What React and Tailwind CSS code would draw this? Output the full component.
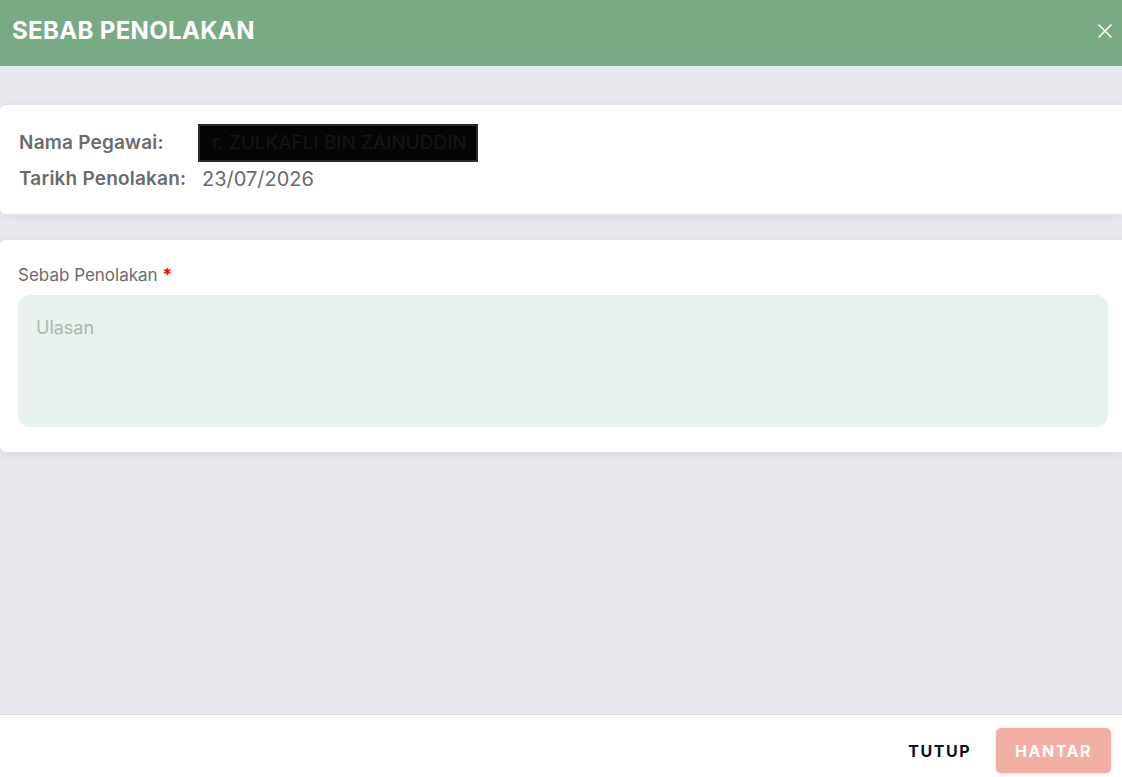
import React from 'react';
import { X } from 'lucide-react';

export default function App() {
  return (
    <div className="w-[1122px] h-[777px] flex flex-col bg-[#e8e9ee] overflow-hidden font-['Inter',sans-serif]">
      {/* Header */}
      <div className="h-[66px] shrink-0 bg-[#78aa84] flex items-center justify-between pl-3 pr-[5px] pb-[4px]">
        <h1 className="text-[24px] leading-[30px] font-bold text-white tracking-[0.35px]">SEBAB PENOLAKAN</h1>
        <button className="text-white">
          <X className="w-[24px] h-[24px]" strokeWidth={1.6} />
        </button>
      </div>

      {/* Body */}
      <div className="flex-1 flex flex-col pt-[39px] gap-[26px]">
        <div className="bg-white rounded-l-md shadow-[0_2px_10px_rgba(0,0,0,0.08)] px-[19px] pt-[19px] pb-[18px] flex flex-col">
          <div className="flex items-center h-[38px]">
            <span className="w-[179px] text-[19px] font-semibold text-[#6b6b6b] tracking-[0.2px]">Nama Pegawai:</span>
            <span className="h-[38px] w-[280px] bg-[#050505] border-2 border-[#2a2a2a] flex items-center px-[12px] text-[19px] text-[#161616] whitespace-nowrap overflow-hidden">
              r. ZULKAFLI BIN ZAINUDDIN
            </span>
          </div>
          <div className="flex items-center h-[34px]">
            <span className="w-[183px] text-[19px] font-semibold text-[#6b6b6b] tracking-[0.2px]">Tarikh Penolakan:</span>
            <span className="text-[20px] text-[#6b6b6b]">23/07/2026</span>
          </div>
        </div>

        <div className="bg-white rounded-l-md shadow-[0_2px_10px_rgba(0,0,0,0.08)] pl-[18px] pr-[14px] pt-[24px] pb-[25px]">
          <label className="block text-[17px] leading-[22px] text-[#6b6b6b] mb-[9px]">
            Sebab Penolakan <span className="text-[#ff0000] font-bold">*</span>
          </label>
          <textarea
            placeholder="Ulasan"
            className="block w-full h-[132px] resize-none rounded-[12px] bg-[#e8f2ec] px-[18px] py-[19px] text-[18px] text-[#333] placeholder:text-[#b0b6b2] outline-none"
          />
        </div>
      </div>

      {/* Footer */}
      <div className="h-[63px] shrink-0 bg-white border-t border-[#dddddd] flex justify-end gap-[25px] pr-[11px] pt-[13px]">
        <button className="h-[45px] text-[16px] font-bold tracking-[1.5px] text-[#111] pt-[1px]">TUTUP</button>
        <button className="h-[45px] w-[115px] rounded-[5px] bg-[#f2b0a4] text-white text-[16px] font-bold tracking-[1.5px] shadow-[0_1px_3px_rgba(0,0,0,0.15)]">
          HANTAR
        </button>
      </div>
    </div>
  );
}
